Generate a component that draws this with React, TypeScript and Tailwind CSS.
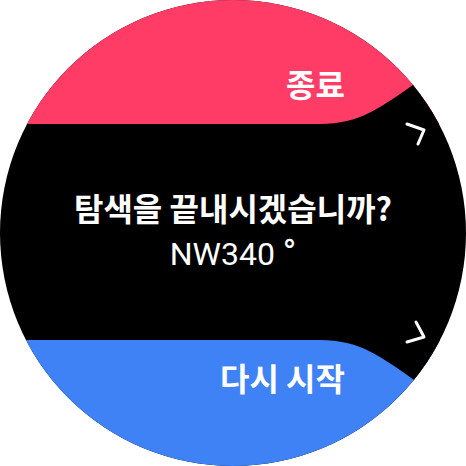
import React from 'react';

const kr = "font-['Noto_Sans_CJK_KR','Noto_Sans',sans-serif]";

function Edges() {
  return (
    <svg className="absolute inset-0 pointer-events-none" width="466" height="466" viewBox="0 0 466 466">
      {/* black notches that cut into the coloured bands */}
      <path d="M320 124 C360 124 380 108 420 80 L466 80 L466 124 Z" fill="#000" />
      <path d="M320 340 C360 340 380 356 420 384 L466 384 L466 340 Z" fill="#000" />
      <polyline points="407,124 424,130 418,144" fill="none" stroke="#fff" strokeWidth="3" strokeLinecap="round" strokeLinejoin="round" />
      <polyline points="416,322 424,337 407,342" fill="none" stroke="#fff" strokeWidth="3" strokeLinecap="round" strokeLinejoin="round" />
    </svg>
  );
}

export default function App() {
  return (
    <div className="w-[466px] h-[466px] bg-white">
      <div className="relative w-[466px] h-[466px] rounded-full overflow-hidden bg-black flex flex-col">
        {/* End */}
        <div className="h-[124px] bg-[#fe3c66] flex justify-end items-start pt-[64px] pr-[121px]">
          <span className={`${kr} text-[32px] leading-[38px] font-bold text-white`}>종료</span>
        </div>

        {/* Question */}
        <div className="flex-1 flex flex-col items-center justify-center text-white pb-[3px]">
          <div className={`${kr} text-[32px] leading-[46px] font-bold`}>탐색을 끝내시겠습니까?</div>
          <div className="font-['Roboto',sans-serif] text-[32px] leading-[46px]">
            NW340 <span className="text-[36px]">°</span>
          </div>
        </div>

        {/* Restart */}
        <div className="h-[126px] bg-[#3f82f6] flex justify-end items-start pt-[18px] pr-[121px]">
          <span className={`${kr} text-[32px] leading-[38px] font-bold text-white`}>다시 시작</span>
        </div>

        <Edges />
      </div>
    </div>
  );
}
